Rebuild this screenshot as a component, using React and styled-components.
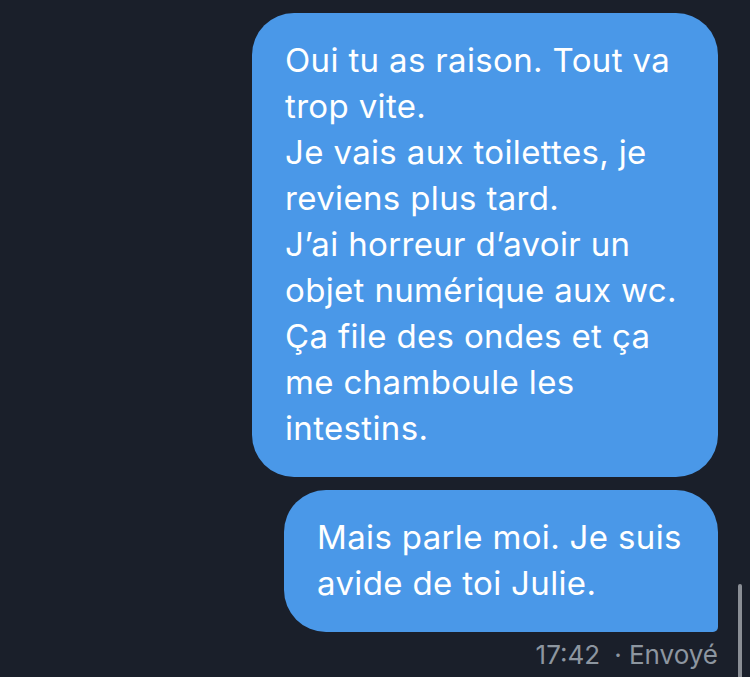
import React from "react";
import styled, { createGlobalStyle } from "styled-components";

const GlobalStyle = createGlobalStyle`
  html, body {
    margin: 0;
    padding: 0;
    background: #1a1f2a;
    overflow: hidden;
  }
`;

const Screen = styled.div`
  position: relative;
  width: 750px;
  height: 677px;
  background: #1a1f2a;
  font-family: Inter, "Noto Sans", "Liberation Sans", sans-serif;
  overflow: hidden;
`;

const Thread = styled.div`
  display: flex;
  flex-direction: column;
  align-items: flex-end;
  gap: 13px;
  padding: 13px 32px 0 0;
`;

const Bubble = styled.div`
  box-sizing: border-box;
  width: ${(props) => props.width}px;
  padding: 24px 12px 26px 33px;
  background: #4a98e8;
  color: #ffffff;
  font-size: 33px;
  line-height: 46px;
  letter-spacing: 0.35px;
  white-space: pre-line;
  border-radius: ${(props) => (props.last ? "42px 42px 5px 42px" : "42px")};
`;

const Meta = styled.div`
  margin-top: -5px;
  color: #8d96a0;
  font-size: 26px;
  line-height: 30px;
  display: flex;
  gap: 14px;
`;

const ScrollThumb = styled.div`
  position: absolute;
  right: 8px;
  top: 584px;
  width: 4px;
  height: 100px;
  border-radius: 2px;
  background: #8a8e95;
`;

const messages = [
  {
    width: 466,
    text: "Oui tu as raison. Tout va\ntrop vite.\nJe vais aux toilettes, je\nreviens plus tard.\nJ’ai horreur d’avoir un\nobjet numérique aux wc.\nÇa file des ondes et ça\nme chamboule les\nintestins.",
  },
  {
    width: 434,
    text: "Mais parle moi. Je suis\navide de toi Julie.",
    last: true,
  },
];

export default function App() {
  return (
    <Screen>
      <GlobalStyle />
      <Thread>
        {messages.map((m, i) => (
          <Bubble key={i} width={m.width} last={m.last}>
            {m.text}
          </Bubble>
        ))}
        <Meta>
          <span>17:42</span>
          <span>· Envoyé</span>
        </Meta>
      </Thread>
      <ScrollThumb />
    </Screen>
  );
}
